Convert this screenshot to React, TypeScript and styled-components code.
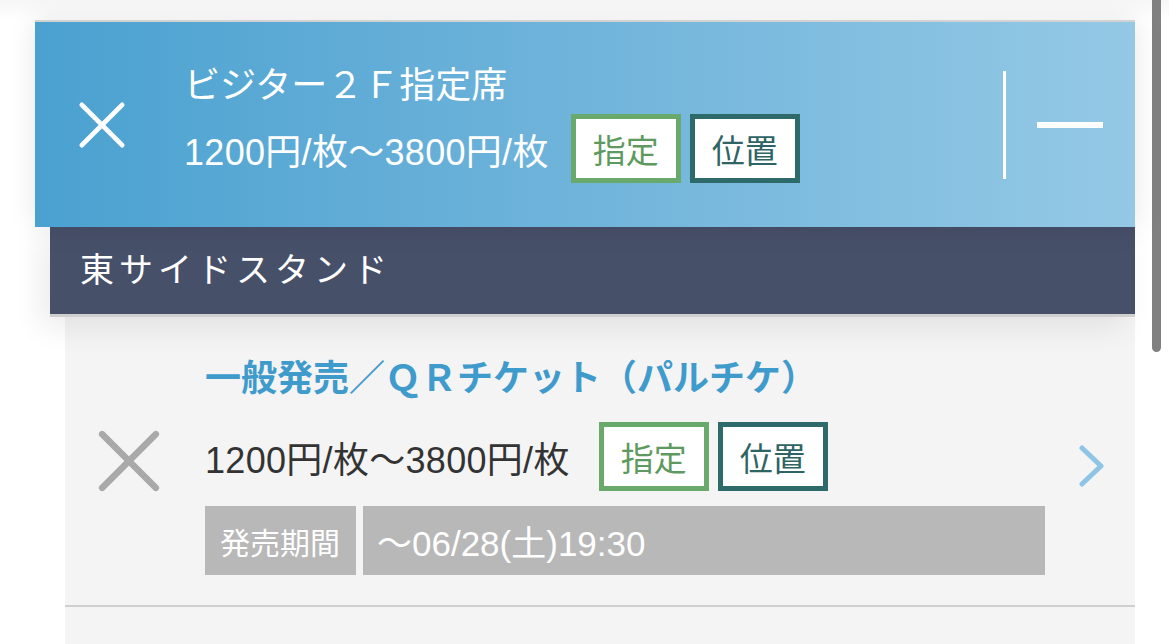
import styled, { createGlobalStyle } from "styled-components";

const GlobalStyle = createGlobalStyle`
  html, body {
    margin: 0;
    padding: 0;
    background: #ffffff;
    overflow: hidden;
  }
  body {
    font-family: "Liberation Sans", "Noto Sans CJK JP", sans-serif;
  }
`;

const Page = styled.div`
  position: relative;
  width: 1169px;
  height: 644px;
  padding-top: 20px;
  box-sizing: border-box;
  background: linear-gradient(#f6f6f6, #ffffff 20px);
  overflow: hidden;
`;

const Panel = styled.div`
  margin-left: 35px;
  width: 1100px;
  display: flex;
  flex-direction: column;
`;

const Header = styled.div`
  height: 207px;
  box-sizing: border-box;
  border-top: 2px solid #d2d2d2;
  background: linear-gradient(90deg, #4aa1d0 0%, #74b6dc 55%, #94c9e5 100%);
  display: flex;
  align-items: center;
  padding-left: 43px;
  color: #fff;
  box-shadow: 0 0 26px rgba(0, 0, 0, 0.1);
  position: relative;
  z-index: 2;
`;

const CrossIcon = ({ color, size }: { color: string; size: number }) => (
  <svg width={size} height={size} viewBox="0 0 50 50">
    <path
      d="M4 4 L46 46 M46 4 L4 46"
      stroke={color}
      strokeWidth="5"
      strokeLinecap="round"
      fill="none"
    />
  </svg>
);

const HeaderText = styled.div`
  margin-left: 58px;
  display: flex;
  flex-direction: column;
  gap: 10px;
  flex: 1;
  margin-top: -6px;
`;

const Title = styled.div<{ $color?: string; $bold?: boolean }>`
  font-family: "Noto Sans CJK JP", sans-serif;
  font-size: 36px;
  line-height: 44px;
  color: ${(p) => p.$color || "#fff"};
  font-weight: ${(p) => (p.$bold ? 700 : 400)};
  white-space: nowrap;
`;

const PriceRow = styled.div`
  display: flex;
  align-items: center;
`;

const Price = styled.span<{ $color: string }>`
  font-size: 36px;
  color: ${(p) => p.$color};
  white-space: nowrap;
  letter-spacing: 0.3px;
`;

const Badges = styled.div<{ $offset: number }>`
  display: flex;
  gap: 9px;
  margin-left: ${(p) => p.$offset}px;
`;

const Badge = styled.span<{ $border: string; $text: string }>`
  width: 110px;
  height: 69px;
  box-sizing: border-box;
  border: 5px solid ${(p) => p.$border};
  background: #fff;
  color: ${(p) => p.$text};
  font-family: "Noto Sans CJK JP", sans-serif;
  font-size: 33px;
  display: flex;
  align-items: center;
  justify-content: center;
`;

const Divider = styled.div`
  width: 3px;
  height: 108px;
  background: #fff;
`;

const Minus = styled.div`
  width: 66px;
  height: 6px;
  background: #fff;
  margin: 0 32px 0 31px;
`;

const Section = styled.div`
  margin-left: 15px;
  height: 90px;
  box-sizing: border-box;
  background: #475069;
  border-bottom: 3px solid #cfcfcf;
  display: flex;
  align-items: center;
  padding-left: 30px;
  padding-bottom: 6px;
  color: #fff;
  font-family: "Noto Sans CJK JP", sans-serif;
  font-size: 34px;
  letter-spacing: 5px;
  box-shadow: -10px 10px 30px rgba(0, 0, 0, 0.08);
  position: relative;
  z-index: 1;
`;

const List = styled.div`
  margin-left: 30px;
  background: #f4f4f4;
  height: 400px;
`;

const Item = styled.div`
  height: 290px;
  box-sizing: border-box;
  border-bottom: 2px solid #cfcfcf;
  display: flex;
  align-items: center;
  padding-left: 32px;
`;

const ItemBody = styled.div`
  margin-left: 44px;
  flex: 1;
  display: flex;
  flex-direction: column;
  padding-top: 6px;
`;

const ItemPriceRow = styled(PriceRow)`
  margin-top: 25px;
`;

const PeriodRow = styled.div`
  display: flex;
  gap: 7px;
  margin-top: 15px;
  height: 69px;
`;

const PeriodCell = styled.div<{ $grow?: boolean }>`
  background: #b8b8b8;
  color: #fff;
  font-size: ${(p) => (p.$grow ? 35 : 30)}px;
  display: flex;
  align-items: center;
  padding-left: ${(p) => (p.$grow ? 14 : 15)}px;
  padding-right: ${(p) => (p.$grow ? 0 : 16)}px;
  flex: ${(p) => (p.$grow ? 1 : "none")};
  white-space: nowrap;
`;

const Chevron = styled.div`
  margin: 10px 30px 0 33px;
  display: flex;
`;

const Scrollbar = styled.div`
  position: absolute;
  top: 0;
  left: 1152px;
  width: 9px;
  height: 352px;
  background: #808080;
  border-radius: 0 0 5px 5px;
`;

export default function App() {
  return (
    <>
      <GlobalStyle />
      <Page>
        <Panel>
          <Header>
            <CrossIcon color="#fff" size={48} />
            <HeaderText>
              <Title>ビジター２Ｆ指定席</Title>
              <PriceRow>
                <Price $color="#fff">1200円/枚～3800円/枚</Price>
                <Badges $offset={22}>
                  <Badge $border="#6aa96c" $text="#5e9a60">
                    指定
                  </Badge>
                  <Badge $border="#2f6a6b" $text="#2f6465">
                    位置
                  </Badge>
                </Badges>
              </PriceRow>
            </HeaderText>
            <Divider />
            <Minus />
          </Header>
          <Section>東サイドスタンド</Section>
          <List>
            <Item>
              <CrossIcon color="#a9a9a9" size={64} />
              <ItemBody>
                <Title $color="#3f9bcc" $bold>
                  一般発売／ＱＲチケット（パルチケ）
                </Title>
                <ItemPriceRow>
                  <Price $color="#333">1200円/枚～3800円/枚</Price>
                  <Badges $offset={29}>
                    <Badge $border="#6aa96c" $text="#5e9a60">
                      指定
                    </Badge>
                    <Badge $border="#2f6a6b" $text="#2f6465">
                      位置
                    </Badge>
                  </Badges>
                </ItemPriceRow>
                <PeriodRow>
                  <PeriodCell>発売期間</PeriodCell>
                  <PeriodCell $grow>～06/28(土)19:30</PeriodCell>
                </PeriodRow>
              </ItemBody>
              <Chevron>
                <svg width="27" height="42" viewBox="0 0 27 42">
                  <path
                    d="M4 3 L23 21 L4 39"
                    stroke="#8ec5e5"
                    strokeWidth="5"
                    strokeLinecap="round"
                    strokeLinejoin="round"
                    fill="none"
                  />
                </svg>
              </Chevron>
            </Item>
          </List>
        </Panel>
        <Scrollbar />
      </Page>
    </>
  );
}
